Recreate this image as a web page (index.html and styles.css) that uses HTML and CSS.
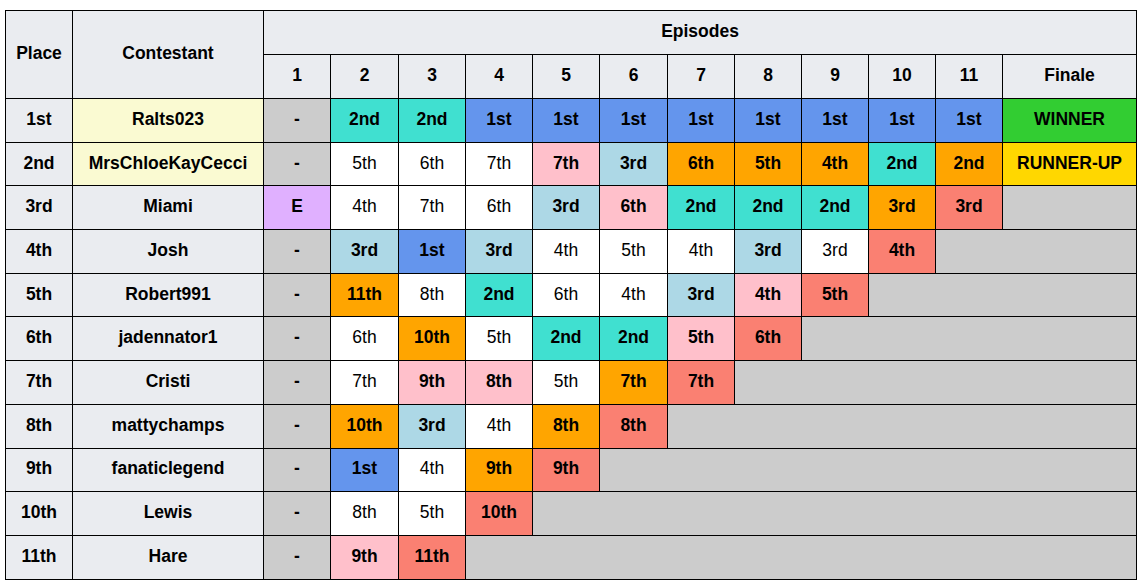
FILE: index.html
```html
<!DOCTYPE html>
<html>
<head>
<meta charset="utf-8">
<link rel="stylesheet" href="styles.css">
</head>
<body>
<table class="results">
  <colgroup>
    <col class="c-place"><col class="c-name">
    <col class="c-ep"><col class="c-ep2"><col class="c-ep"><col class="c-ep"><col class="c-ep"><col class="c-ep2"><col class="c-ep"><col class="c-ep"><col class="c-ep"><col class="c-ep"><col class="c-ep">
    <col class="c-fin">
  </colgroup>
  <thead>
    <tr class="hr">
      <th rowspan="2">Place</th>
      <th rowspan="2">Contestant</th>
      <th colspan="12">Episodes</th>
    </tr>
    <tr class="hr">
      <th>1</th><th>2</th><th>3</th><th>4</th><th>5</th><th>6</th><th>7</th><th>8</th><th>9</th><th>10</th><th>11</th><th>Finale</th>
    </tr>
  </thead>
  <tbody>
    <tr>
      <th>1st</th><th class="fin">Ralts023</th>
      <td class="na">-</td><td class="tq">2nd</td><td class="tq">2nd</td><td class="bl">1st</td><td class="bl">1st</td><td class="bl">1st</td><td class="bl">1st</td><td class="bl">1st</td><td class="bl">1st</td><td class="bl">1st</td><td class="bl">1st</td><td class="win">WINNER</td>
    </tr>
    <tr>
      <th>2nd</th><th class="fin">MrsChloeKayCecci</th>
      <td class="na">-</td><td>5th</td><td>6th</td><td>7th</td><td class="pk">7th</td><td class="lb">3rd</td><td class="or">6th</td><td class="or">5th</td><td class="or">4th</td><td class="tq">2nd</td><td class="or">2nd</td><td class="ru">RUNNER-UP</td>
    </tr>
    <tr>
      <th>3rd</th><th>Miami</th>
      <td class="ex">E</td><td>4th</td><td>7th</td><td>6th</td><td class="lb">3rd</td><td class="pk">6th</td><td class="tq">2nd</td><td class="tq">2nd</td><td class="tq">2nd</td><td class="or">3rd</td><td class="sa">3rd</td><td class="na"></td>
    </tr>
    <tr>
      <th>4th</th><th>Josh</th>
      <td class="na">-</td><td class="lb">3rd</td><td class="bl">1st</td><td class="lb">3rd</td><td>4th</td><td>5th</td><td>4th</td><td class="lb">3rd</td><td>3rd</td><td class="sa">4th</td><td class="na" colspan="2"></td>
    </tr>
    <tr>
      <th>5th</th><th>Robert991</th>
      <td class="na">-</td><td class="or">11th</td><td>8th</td><td class="tq">2nd</td><td>6th</td><td>4th</td><td class="lb">3rd</td><td class="pk">4th</td><td class="sa">5th</td><td class="na" colspan="3"></td>
    </tr>
    <tr>
      <th>6th</th><th>jadennator1</th>
      <td class="na">-</td><td>6th</td><td class="or">10th</td><td>5th</td><td class="tq">2nd</td><td class="tq">2nd</td><td class="pk">5th</td><td class="sa">6th</td><td class="na" colspan="4"></td>
    </tr>
    <tr>
      <th>7th</th><th>Cristi</th>
      <td class="na">-</td><td>7th</td><td class="pk">9th</td><td class="pk">8th</td><td>5th</td><td class="or">7th</td><td class="sa">7th</td><td class="na" colspan="5"></td>
    </tr>
    <tr>
      <th>8th</th><th>mattychamps</th>
      <td class="na">-</td><td class="or">10th</td><td class="lb">3rd</td><td>4th</td><td class="or">8th</td><td class="sa">8th</td><td class="na" colspan="6"></td>
    </tr>
    <tr>
      <th>9th</th><th>fanaticlegend</th>
      <td class="na">-</td><td class="bl">1st</td><td>4th</td><td class="or">9th</td><td class="sa">9th</td><td class="na" colspan="7"></td>
    </tr>
    <tr>
      <th>10th</th><th>Lewis</th>
      <td class="na">-</td><td>8th</td><td>5th</td><td class="sa">10th</td><td class="na" colspan="8"></td>
    </tr>
    <tr>
      <th>11th</th><th>Hare</th>
      <td class="na">-</td><td class="pk">9th</td><td class="sa">11th</td><td class="na" colspan="9"></td>
    </tr>
  </tbody>
</table>
</body>
</html>
```

FILE: styles.css
```css
html, body {
  margin: 0;
  padding: 0;
  background: #ffffff;
}

body {
  font-family: "Liberation Sans", Arial, sans-serif;
  font-size: 17.5px;
  color: #000000;
}

.results {
  margin: 10px 0 0 5px;
  border-collapse: collapse;
  table-layout: fixed;
  width: 1131px;
}

.c-place { width: 67px; }
.c-name { width: 191px; }
.c-ep { width: 67px; }
.c-ep2 { width: 68px; }
.c-fin { width: 134px; }

.results th,
.results td {
  border: 1px solid #000000;
  padding: 0 0 3px 0;
  text-align: center;
  vertical-align: middle;
  background: #ffffff;
  line-height: 20px;
}

.results th {
  background: #eaecf0;
  font-weight: bold;
}

.results thead tr { height: 44px; }
.results tbody tr { height: 43.7px; }

.results td { font-weight: normal; }

.results .fin { background: #fafad2; }
.results .na { background: #cccccc; font-weight: bold; }
.results .ex { background: #e0b0ff; font-weight: bold; }
.results .tq { background: #40e0d0; font-weight: bold; }
.results .bl { background: #6495ed; font-weight: bold; }
.results .lb { background: #add8e6; font-weight: bold; }
.results .or { background: #ffa500; font-weight: bold; }
.results .pk { background: #ffc0cb; font-weight: bold; }
.results .sa { background: #fa8072; font-weight: bold; }
.results .win { background: #32cd32; font-weight: bold; }
.results .ru { background: #ffd700; font-weight: bold; }
```
